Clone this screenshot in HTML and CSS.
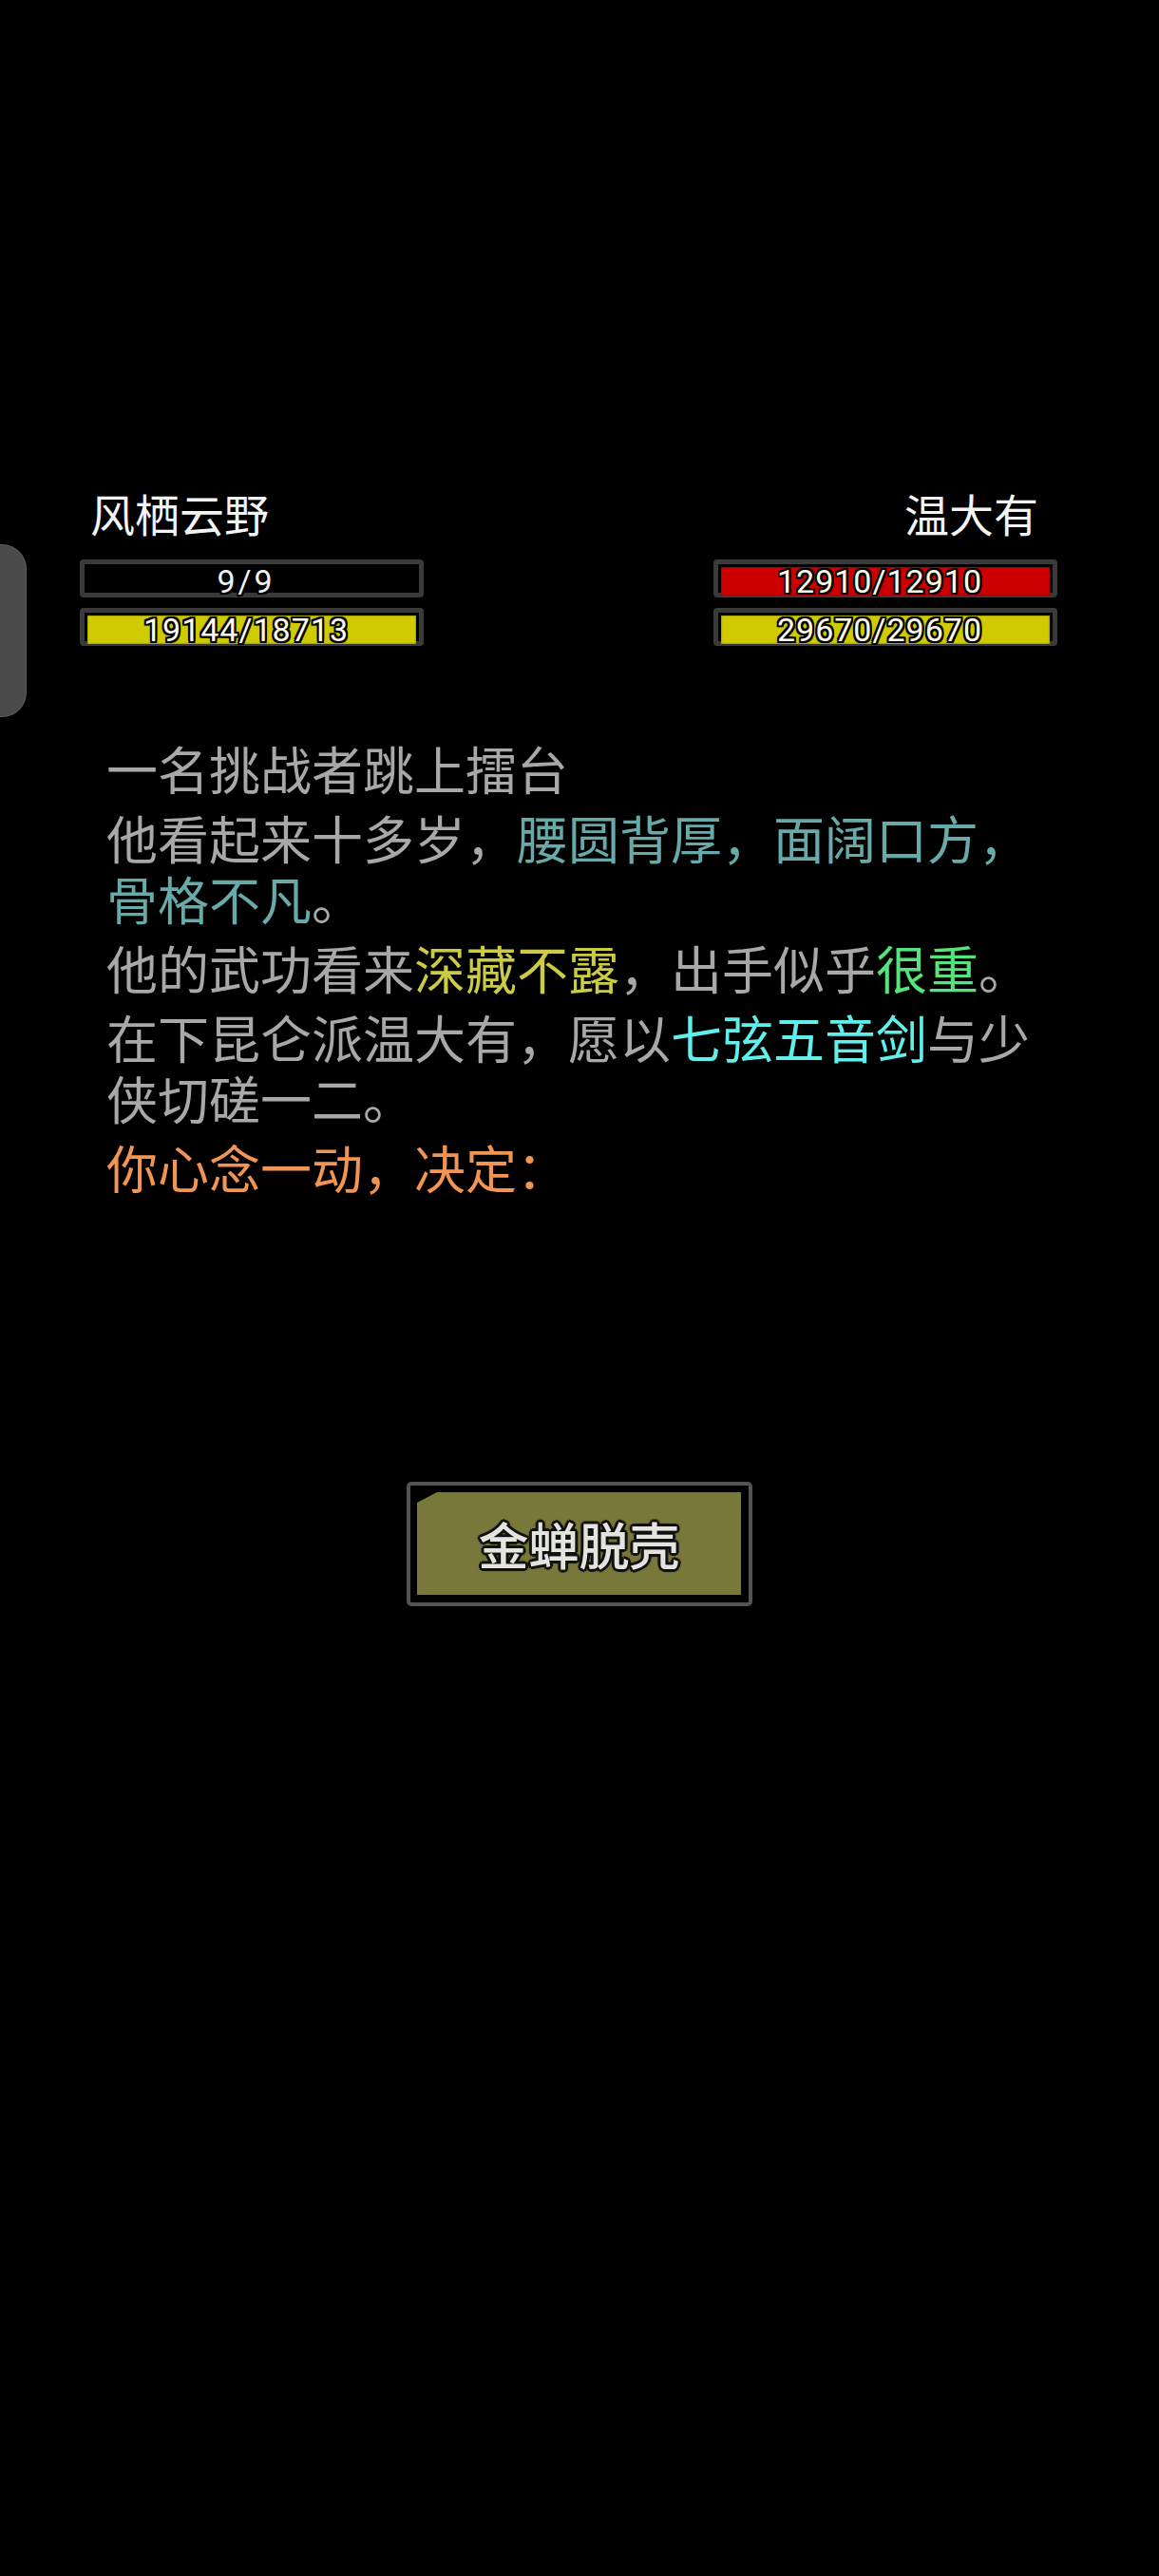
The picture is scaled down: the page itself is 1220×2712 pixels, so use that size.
FILE: index.html
```html
<!DOCTYPE html>
<html lang="zh-CN">
<head>
<meta charset="utf-8">
<title>擂台</title>
<link rel="stylesheet" href="styles.css">
</head>
<body>
<div class="screen">
  <div class="side-handle"></div>

  <section class="fighters">
    <div class="fighter">
      <div class="name">风栖云野</div>
      <div class="bar">
        <div class="fill fill-empty" style="width:100%"></div>
        <div class="label label-plain">9/9</div>
      </div>
      <div class="bar">
        <div class="fill fill-yellow" style="width:100%"></div>
        <div class="label">19144/18713</div>
      </div>
    </div>
    <div class="fighter fighter-right">
      <div class="name">温大有</div>
      <div class="bar">
        <div class="fill fill-red" style="width:100%"></div>
        <div class="label">12910/12910</div>
      </div>
      <div class="bar">
        <div class="fill fill-yellow" style="width:100%"></div>
        <div class="label">29670/29670</div>
      </div>
    </div>
  </section>

  <section class="log">
    <p>一名挑战者跳上擂台</p>
    <p>他看起来十多岁，<span class="c-teal">腰圆背厚，面阔口方，骨格不凡</span>。</p>
    <p>他的武功看来<span class="c-olive">深藏不露</span>，出手似乎<span class="c-green">很重</span>。</p>
    <p>在下昆仑派温大有，愿以<span class="c-cyan">七弦五音剑</span>与少侠切磋一二。</p>
    <p class="c-orange">你心念一动，决定：</p>
  </section>

  <section class="actions">
    <button class="action-btn" type="button"><span class="action-face">金蝉脱壳</span></button>
  </section>
</div>
</body>
</html>
```

FILE: styles.css
```css
html, body {
  margin: 0;
  padding: 0;
  background: #000;
}

body {
  font-family: "Noto Sans CJK SC", "Noto Sans", sans-serif;
  color: #a8a8a8;
}

.screen {
  position: relative;
  width: 1220px;
  min-height: 2712px;
  padding-top: 512px;
  box-sizing: border-box;
}

.side-handle {
  position: absolute;
  left: 0;
  top: 573px;
  width: 28px;
  height: 182px;
  box-sizing: border-box;
  background: #4a4a4a;
  border: 1px solid #5e5e5e;
  border-left: none;
  border-radius: 0 26px 26px 0;
}

/* fighters */
.fighters {
  display: flex;
  justify-content: space-between;
  padding: 0 107px 0 84px;
}

.fighter {
  width: 362px;
  display: flex;
  flex-direction: column;
}

.name {
  font-size: 47px;
  line-height: 56px;
  height: 56px;
  color: #f4f4f4;
  padding-left: 11px;
  margin-bottom: 21px;
  white-space: nowrap;
}

.fighter-right .name {
  text-align: right;
  padding-left: 0;
  padding-right: 20px;
}

.bar {
  display: grid;
  height: 40px;
  box-sizing: border-box;
  border: 5px solid #3a3a3a;
  border-radius: 4px;
  padding: 3px;
  background: #000;
  margin-bottom: 11px;
}

.fill {
  grid-area: 1 / 1;
  height: 100%;
  box-shadow: inset 0 0 2px rgba(0, 0, 0, 0.55);
}

.fill-empty { background: transparent; box-shadow: none; }
.fill-yellow { background: #cfcb00; }
.fill-red { background: #cc0000; }

.label {
  grid-area: 1 / 1;
  align-self: center;
  justify-self: center;
  margin-right: 12px;
  font-family: Roboto, "Liberation Sans", sans-serif;
  font-size: 34px;
  line-height: 30px;
  letter-spacing: 1px;
  color: #fffbe8;
  white-space: nowrap;
  text-shadow:
    2px 0 0 #000, -2px 0 0 #000, 0 2px 0 #000, 0 -2px 0 #000,
    2px 2px 0 #000, -2px 2px 0 #000, 2px -2px 0 #000, -2px -2px 0 #000,
    0 0 3px #000;
}

.label-plain {
  color: #f2f2f2;
  letter-spacing: 3px;
}

/* log */
.log {
  margin-top: 86px;
  margin-left: 112px;
  width: 1000px;
  font-size: 54px;
  line-height: 64px;
}

.log p {
  margin: 0 0 9px 0;
}

.c-teal { color: #68aaaa; }
.c-olive { color: #cccc44; }
.c-green { color: #55e47c; }
.c-cyan { color: #5ff0ec; }
.c-orange { color: #f29452; }

/* actions */
.actions {
  display: flex;
  justify-content: center;
  margin-top: 299px;
}

.action-btn {
  display: block;
  width: 364px;
  height: 131px;
  box-sizing: border-box;
  padding: 7px 8px 8px 7px;
  border: 4px solid #535353;
  border-radius: 5px;
  background: #000;
  cursor: pointer;
  font: inherit;
}

.action-face {
  display: flex;
  align-items: center;
  justify-content: center;
  width: 100%;
  height: 100%;
  background: #78783a;
  clip-path: polygon(21px 0, 100% 0, 100% 100%, 0 100%, 0 11px);
  font-family: "Noto Sans CJK SC", sans-serif;
  font-size: 53px;
  font-weight: 500;
  line-height: 1;
  color: #e4e4de;
  text-shadow:
    3px 0 0 #111, -3px 0 0 #111, 0 3px 0 #111, 0 -3px 0 #111,
    2px 2px 0 #111, -2px 2px 0 #111, 2px -2px 0 #111, -2px -2px 0 #111,
    0 0 4px #111;
}
```
